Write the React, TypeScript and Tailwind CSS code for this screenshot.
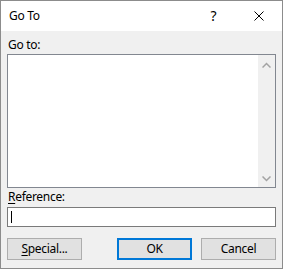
import React from "react";

export default function App() {
  const font = { fontFamily: '"Segoe UI", "Noto Sans", "Open Sans", sans-serif' };
  return (
    <div
      className="w-[283px] h-[269px] border border-[#8c8c8c] bg-[#f0f0f0] flex flex-col text-[12px] leading-[16px] tracking-[-0.3px] text-black"
      style={font}
    >
      {/* Title bar */}
      <div className="h-[30px] bg-white flex items-stretch shrink-0">
        <div className="pl-[8px] flex items-center text-[12px]">Go To</div>
        <div className="ml-auto flex">
          <div className="w-[46px] flex items-center justify-center text-[14px] pl-[1px]">?</div>
          <div className="w-[46px] flex items-center justify-center">
            <svg width="10" height="10" viewBox="0 0 10 10">
              <path d="M0.5 0.5 L9.5 9.5 M9.5 0.5 L0.5 9.5" stroke="#000" strokeWidth="1" fill="none" />
            </svg>
          </div>
        </div>
      </div>

      {/* Body */}
      <div className="flex-1 pt-[6px] pl-[6px] pr-[6px] flex flex-col">
        <div className="pl-[1px]">Go to:</div>
        <div className="mt-[1px] h-[134px] w-[269px] border border-[#828790] bg-white flex">
          <div className="flex-1" />
          <div className="w-[17px] bg-[#f0f0f0] flex flex-col items-center justify-between pt-[7px] pb-[5px]">
            <svg width="9" height="6" viewBox="0 0 9 6">
              <path d="M0.5 5.5 L4.5 1.5 L8.5 5.5" stroke="#a3a3a3" strokeWidth="1.5" fill="none" />
            </svg>
            <svg width="9" height="6" viewBox="0 0 9 6">
              <path d="M0.5 0.5 L4.5 4.5 L8.5 0.5" stroke="#a3a3a3" strokeWidth="1.5" fill="none" />
            </svg>
          </div>
        </div>
        <div className="mt-[1px] pl-[1px]">
          <span className="underline underline-offset-2">R</span>eference:
        </div>
        <div className="mt-[2px] h-[20px] w-[269px] border border-[#7a7a7a] bg-white flex items-center pl-[3px]">
          <div className="w-[1px] h-[12px] bg-black" />
        </div>
        <div className="mt-[11px] flex">
          <button className="w-[75px] h-[22px] border border-[#adadad] bg-[#e1e1e1] flex items-center justify-center">
            <span><span className="underline underline-offset-2">S</span>pecial...</span>
          </button>
          <button className="ml-[35px] w-[75px] h-[22px] border-2 border-[#0078d7] bg-[#e1e1e1] flex items-center justify-center">
            OK
          </button>
          <button className="ml-[9px] w-[75px] h-[22px] border border-[#adadad] bg-[#e1e1e1] flex items-center justify-center">
            Cancel
          </button>
        </div>
      </div>
    </div>
  );
}
